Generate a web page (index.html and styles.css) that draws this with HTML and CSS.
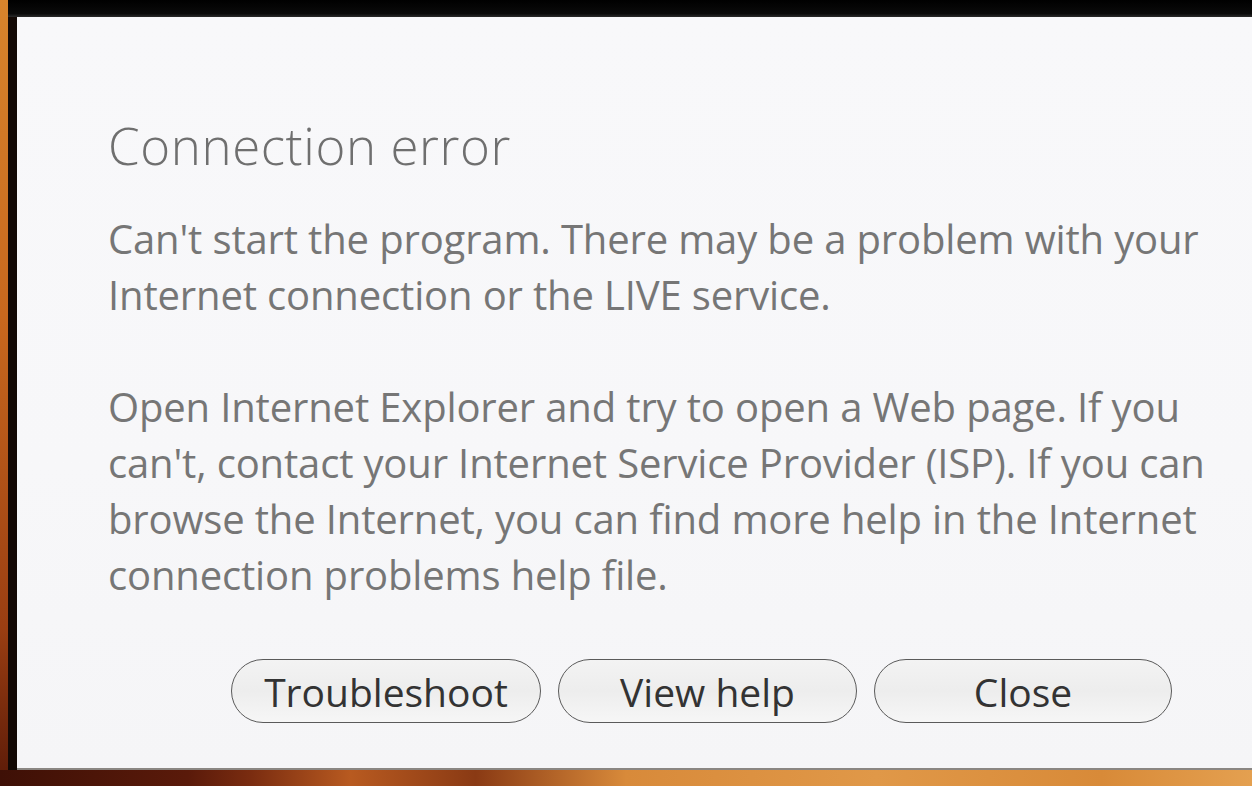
FILE: index.html
```html
<!DOCTYPE html>
<html>
<head>
<meta charset="utf-8">
<link rel="stylesheet" href="styles.css">
</head>
<body>
<div class="screen">
  <div class="frame">
    <div class="topbar"></div>
    <div class="middle">
      <div class="dialog">
        <h1 class="title">Connection error</h1>
        <p class="msg">Can't start the program. There may be a problem with your Internet connection or the LIVE service.</p>
        <p class="msg gap">Open Internet Explorer and try to open a Web page. If you can't, contact your Internet Service Provider (ISP). If you can browse the Internet, you can find more help in the Internet connection problems help file.</p>
        <div class="buttons">
          <button class="btn b1">Troubleshoot</button>
          <button class="btn b2">View help</button>
          <button class="btn b3">Close</button>
        </div>
      </div>
    </div>
    <div class="fire"></div>
  </div>
</div>
</body>
</html>
```
FILE: styles.css
```css
html, body {
  margin: 0;
  padding: 0;
  width: 1252px;
  height: 786px;
  overflow: hidden;
}
.screen {
  height: 786px;
  padding-left: 8px;
  background: linear-gradient(180deg, #d8842c 0%, #c8681e 40%, #9a3e12 80%, #5a1a08 100%);
  box-sizing: border-box;
}
.frame {
  height: 100%;
  display: flex;
  flex-direction: column;
}
.topbar {
  height: 17px;
  flex: none;
  background: linear-gradient(180deg, #000 0%, #0a0a0a 80%, #2a2a2a 100%);
}
.middle {
  flex: 1;
  display: flex;
  background: #120804;
  padding-left: 9px;
}
.dialog {
  flex: 1;
  background: linear-gradient(180deg, #f8f8fa 0%, #f7f7f9 60%, #f5f5f7 100%);
  border-bottom: 2px solid #8a8682;
  padding-left: 91px;
  padding-top: 100px;
  box-sizing: border-box;
  font-family: "Open Sans", "Noto Sans", sans-serif;
}
.title {
  margin: 0;
  font-weight: 300;
  font-size: 51px;
  line-height: 56px;
  color: #6f6f6f;
  letter-spacing: 0.6px;
}
.msg {
  margin: 38px 0 0;
  width: 1114px;
  font-size: 40px;
  line-height: 56px;
  color: #767676;
  letter-spacing: -0.15px;
}
.msg.gap {
  margin-top: 56px;
}
.buttons {
  display: flex;
  gap: 17px;
  margin-top: 56px;
  margin-left: 123px;
}
.btn {
  height: 64px;
  border: 1.5px solid #5a5a5a;
  border-radius: 32px;
  background: linear-gradient(180deg, #f3f3f3 0%, #ededed 50%, #f6f6f6 100%);
  font-family: "Open Sans", "Noto Sans", sans-serif;
  font-size: 39px;
  color: #333;
  padding: 0;
  line-height: 1;
}
.b1 { width: 310px; }
.b2 { width: 299px; }
.b3 { width: 298px; }
.fire {
  height: 16px;
  flex: none;
  margin-left: -8px;
  background: linear-gradient(90deg, #3e1006 0%, #5a1a0a 15%, #7a2c10 20%, #b85a20 28%, #8a3a14 38%, #d88a3a 50%, #e09848 70%, #d88a38 88%, #e4a050 100%);
}
```
